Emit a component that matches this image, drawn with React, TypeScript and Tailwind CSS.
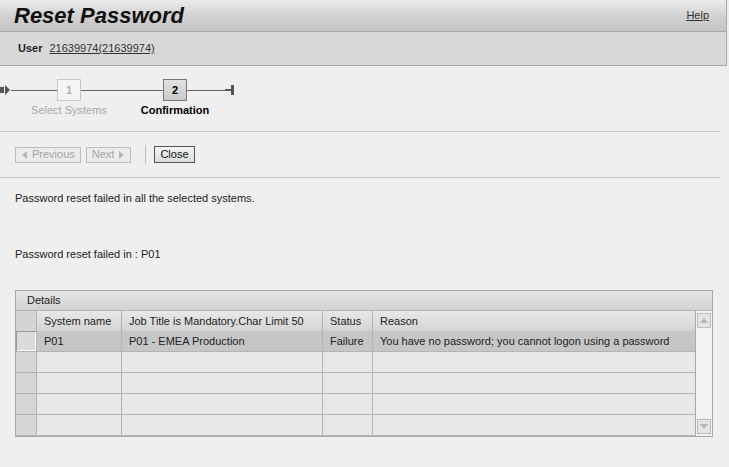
import React from 'react';

const font = "font-['Liberation_Sans',Arial,sans-serif]";

function StartIcon() {
  return (
    <svg width="11" height="10" viewBox="0 0 11 10" className="shrink-0">
      <rect x="0" y="2" width="4" height="6" fill="#555" />
      <polygon points="5,0 10,5 5,10" fill="#555" />
    </svg>
  );
}

function EndIcon() {
  return (
    <svg width="10" height="12" viewBox="0 0 10 12" className="shrink-0">
      <rect x="0" y="5" width="7" height="2" fill="#555" />
      <rect x="6" y="1" width="3" height="10" fill="#555" />
    </svg>
  );
}

function Step({ n, label, active }: { n: number; label: string; active?: boolean }) {
  return (
    <div className="relative flex flex-col items-center">
      <div
        className={
          active
            ? 'flex h-[22px] w-[24px] items-center justify-center border border-[#777] bg-gradient-to-b from-[#e2e2e2] to-[#c8c8c8] text-[11px] font-bold text-black'
            : 'flex h-[22px] w-[24px] items-center justify-center border border-[#c8c8c8] bg-[#f4f4f4] text-[11px] font-bold text-[#b0b0b0]'
        }
      >
        {n}
      </div>
      <div
        className={
          active
            ? 'absolute top-[23px] whitespace-nowrap text-[11px] font-bold text-black'
            : 'absolute top-[23px] whitespace-nowrap text-[11px] text-[#a8a8a8]'
        }
      >
        {label}
      </div>
    </div>
  );
}

function Triangle({ dir }: { dir: 'left' | 'right' | 'up' | 'down' }) {
  const pts = {
    left: '5,0 0,4 5,8',
    right: '0,0 5,4 0,8',
    up: '0,5 4,0 8,5',
    down: '0,0 4,5 8,0',
  }[dir];
  const w = dir === 'left' || dir === 'right' ? 5 : 8;
  const h = dir === 'left' || dir === 'right' ? 8 : 5;
  return (
    <svg width={w} height={h} viewBox={`0 0 ${w} ${h}`}>
      <polygon points={pts} fill="#b4b4b4" />
    </svg>
  );
}

const cols = 'grid grid-cols-[21px_85px_201px_50px_322px]';

function Row({ cells, selected }: { cells: string[]; selected?: boolean }) {
  return (
    <div className={`${cols} h-[21px] border-b border-[#b4b4b4]`}>
      <div
        className={
          selected
            ? 'border-r border-[#b4b4b4] bg-[#dadada] shadow-[inset_1px_1px_0_#9a9a9a,inset_-1px_-1px_0_#fff]'
            : 'border-r border-[#b4b4b4] bg-[#d6d6d6]'
        }
      />
      {cells.map((c, i) => (
        <div
          key={i}
          className={`flex items-center overflow-hidden whitespace-nowrap px-[7px] text-[11px] text-[#222] ${
            i < cells.length - 1 ? 'border-r border-[#b4b4b4]' : ''
          } ${selected ? 'bg-[#c6c6c6]' : 'bg-[#e8e8e8]'}`}
        >
          {c}
        </div>
      ))}
    </div>
  );
}

export default function App() {
  return (
    <div className={`${font} h-[467px] w-[729px] overflow-hidden bg-[#efefef] text-[11px] text-black`}>
      {/* header */}
      <div className="mr-[2px] border-r border-[#a8a8a8]">
        <div className="flex h-[32px] items-center justify-between border-b border-[#a8a8a8] bg-gradient-to-b from-[#ececec] via-[#d2d2d2] to-[#c4c4c4] pl-[14px] pr-[17px]">
          <span className="text-[22px] font-bold italic leading-none text-[#111]">Reset Password</span>
          <a href="#" className="text-[11px] text-[#333] underline">
            Help
          </a>
        </div>
        <div className="flex h-[34px] items-center gap-[7px] border-b border-[#a8a8a8] bg-[#d8d8d8] pl-[18px]">
          <span className="font-bold text-[#222]">User</span>
          <a href="#" className="text-[#333] underline">
            21639974(21639974)
          </a>
        </div>
      </div>

      {/* roadmap */}
      <div className="flex h-[65px] items-start pt-[13px]">
        <div className="flex items-center">
          <div className="flex h-[22px] items-center">
            <StartIcon />
          </div>
          <div className="h-px w-[46px] bg-[#666]" />
          <Step n={1} label="Select Systems" />
          <div className="h-px w-[82px] bg-[#666]" />
          <Step n={2} label="Confirmation" active />
          <div className="h-px w-[38px] bg-[#666]" />
          <div className="flex h-[22px] items-center">
            <EndIcon />
          </div>
        </div>
      </div>

      {/* toolbar */}
      <div className="mr-[9px] flex h-[47px] items-center gap-[5px] border-y border-[#c8c8c8] pl-[15px]">
        <div className="flex h-[16px] items-center gap-[5px] border border-[#bcbcbc] bg-[#ececec] pl-[6px] pr-[5px] text-[#a4a4a4]">
          <Triangle dir="left" />
          <span>Previous</span>
        </div>
        <div className="flex h-[16px] items-center gap-[5px] border border-[#bcbcbc] bg-[#ececec] pl-[5px] pr-[6px] text-[#a4a4a4]">
          <span>Next</span>
          <Triangle dir="right" />
        </div>
        <div className="ml-[9px] mr-[3px] h-[19px] w-px bg-[#bdbdbd]" />
        <div className="flex h-[17px] items-center border border-[#555] bg-gradient-to-b from-[#f4f4f4] to-[#dcdcdc] px-[5px] text-[#111]">
          Close
        </div>
      </div>

      {/* messages */}
      <div className="pl-[15px] pt-[14px] text-[#222]">
        <p className="leading-[13px]">Password reset failed in all the selected systems.</p>
        <p className="mt-[43px] leading-[13px]">Password reset failed in : P01</p>
      </div>

      {/* table */}
      <div className="ml-[15px] mt-[29px] w-[698px] border border-[#a8a8a8]">
        <div className="flex h-[20px] items-center border-b border-[#b4b4b4] bg-gradient-to-b from-[#e6e6e6] to-[#d2d2d2] pl-[11px] text-[#222]">
          Details
        </div>
        <div className="flex">
          <div className="flex-1">
            <div className={`${cols} h-[20px] bg-gradient-to-b from-[#e8e8e8] to-[#d4d4d4]`}>
              {['', 'System name', 'Job Title is Mandatory.Char Limit 50', 'Status', 'Reason'].map((h, i) => (
                <div
                  key={i}
                  className={`flex items-center whitespace-nowrap px-[7px] text-[#222] ${
                    i < 4 ? 'border-r border-[#b4b4b4]' : ''
                  } ${i === 0 ? 'bg-[#d4d4d4]' : ''}`}
                >
                  {h}
                </div>
              ))}
            </div>
            <Row
              selected
              cells={['P01', 'P01 - EMEA Production', 'Failure', 'You have no password; you cannot logon using a password']}
            />
            <Row cells={['', '', '', '']} />
            <Row cells={['', '', '', '']} />
            <Row cells={['', '', '', '']} />
            <Row cells={['', '', '', '']} />
          </div>
          <div className="flex w-[18px] flex-col items-center justify-between border-l border-[#a8a8a8] bg-[#f2f2f2] py-[2px]">
            <div className="flex h-[15px] w-[14px] items-center justify-center border border-[#bcbcbc] bg-[#e4e4e4]">
              <Triangle dir="up" />
            </div>
            <div className="flex h-[15px] w-[14px] items-center justify-center border border-[#bcbcbc] bg-[#e4e4e4]">
              <Triangle dir="down" />
            </div>
          </div>
        </div>
      </div>
    </div>
  );
}
